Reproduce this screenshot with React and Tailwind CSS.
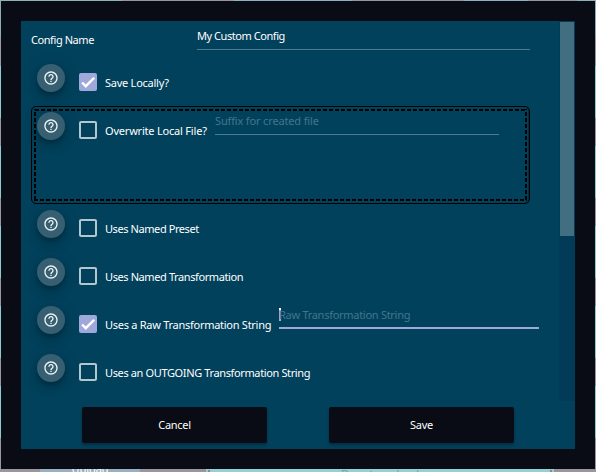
import React from "react";

function HelpButton() {
  return (
    <button className="mt-[6px] ml-[6px] flex size-7 shrink-0 items-center justify-center rounded-full bg-[#365f72] shadow-[0_3px_5px_-1px_rgba(0,0,0,0.2),0_6px_10px_rgba(0,0,0,0.14),0_1px_18px_rgba(0,0,0,0.12)]">
      <svg viewBox="0 0 24 24" className="size-4 fill-[#f0f3f4]">
        <path d="M11 18h2v-2h-2v2zm1-16C6.48 2 2 6.48 2 12s4.48 10 10 10 10-4.48 10-10S17.52 2 12 2zm0 18c-4.41 0-8-3.59-8-8s3.59-8 8-8 8 3.59 8 8-3.59 8-8 8zm0-14c-2.21 0-4 1.79-4 4h2c0-1.1.9-2 2-2s2 .9 2 2c0 2-3 1.75-3 5h2c0-2.25 3-2.5 3-5 0-2.21-1.79-4-4-4z" />
      </svg>
    </button>
  );
}

function Checkbox({ checked }) {
  return checked ? (
    <span className="mt-[15px] ml-[14px] block size-[18px] shrink-0 rounded-[2px] bg-[#9fa8da]">
      <svg viewBox="0 0 24 24" className="size-[18px] fill-none stroke-white stroke-[3.2]">
        <path d="M4.1 12.7 9 17.6 20.3 6.3" />
      </svg>
    </span>
  ) : (
    <span className="mt-[15px] ml-[14px] block size-[18px] shrink-0 rounded-[2px] border-2 border-[#b3c6ce]" />
  );
}

function Row({ label, width, checked, children }) {
  return (
    <div className="flex h-12 shrink-0 items-start">
      <HelpButton />
      <Checkbox checked={checked} />
      <span className={"mt-[17px] ml-2 h-4 shrink-0 leading-4 whitespace-nowrap " + width}>{label}</span>
      {children}
    </div>
  );
}

function EdgeColumn() {
  return (
    <div className="flex w-px flex-col">
      <div className="h-9 bg-[#8eadb3]" />
      <div className="h-[29px] bg-[#9b9aa0]" />
      <div className="h-[52px] bg-[#8ccdd1]" />
      <div className="h-7 bg-[#9b969e]" />
      <div className="h-[52px] bg-[#8ccdd1]" />
      <div className="h-[28px] bg-[#9b969e]" />
      <div className="h-[52px] bg-[#8ccdd1]" />
      <div className="h-[28px] bg-[#9b969e]" />
      <div className="h-[52px] bg-[#8ccdd1]" />
      <div className="h-[28px] bg-[#9b969e]" />
      <div className="h-[52px] bg-[#8ccdd1]" />
      <div className="grow bg-[#9b969e]" />
    </div>
  );
}

export default function App() {
  return (
    <div className="flex h-[472px] w-[596px] flex-col overflow-hidden bg-[#9b969e] font-['Noto_Sans',sans-serif] text-[11px] text-white">
      <div className="flex h-px shrink-0">
        <div className="w-[122px] bg-[#8fb1b8]" />
        <div className="w-[112px] bg-[#97969b]" />
        <div className="w-[118px] bg-[#8cb3bd]" />
        <div className="w-[112px] bg-[#97969b]" />
        <div className="w-[64px] bg-[#8cb3bd]" />
        <div className="w-[49px] bg-[#97969b]" />
        <div className="grow bg-[#8cb3bd]" />
      </div>
      <div className="flex h-[468px] shrink-0">
        <EdgeColumn />
        <div className="w-[594px] bg-[#090c14] p-5">
          <div className="flex h-[428px] flex-col bg-[#02415c]">
            <div className="flex h-[380px] overflow-hidden">
              <div className="flex w-[538px] flex-col pl-[10px]">
                <div className="flex h-[37px] shrink-0">
                  <span className="mt-[11px] w-[166px] leading-4 tracking-[-0.43px]">Config Name</span>
                  <div className="h-[29px] w-[333px] border-b border-[#4a7c90] pt-[7px] leading-4 tracking-[-0.45px]">My Custom Config</div>
                </div>
                <Row label="Save Locally?" width="w-[64px] tracking-[-0.25px]" checked />
                <div className="flex h-[98px] w-[499px] shrink-0 rounded-[5px] border border-black p-[2px] shadow-[inset_-1px_0_0_#022b3e]">
                  <div className="grow [background:linear-gradient(90deg,#000_4px,transparent_4px)_1px_0/6px_2px_repeat-x,linear-gradient(90deg,#000_4px,transparent_4px)_0_100%/6px_2px_repeat-x,linear-gradient(#000_4px,transparent_4px)_0_3px/2px_6px_repeat-y,linear-gradient(#000_4px,transparent_4px)_100%_3px/2px_6px_repeat-y]">
                    <div className="-mt-[3px] -ml-[3px]">
                      <Row label="Overwrite Local File?" width="w-[102px] tracking-[-0.2px]">
                        <div className="ml-2 h-[29px] w-[284px] shrink-0 border-b border-[#4a7c90] pt-[7px] leading-4 tracking-[-0.15px] text-[#41778c]">Suffix for created file</div>
                      </Row>
                    </div>
                  </div>
                </div>
                <Row label="Uses Named Preset" width="w-[95px] tracking-[-0.42px]" />
                <Row label="Uses Named Transformation" width="w-[140px] tracking-[-0.4px]" />
                <Row label="Uses a Raw Transformation String" width="w-[166px] tracking-[-0.27px]" checked>
                  <div className="ml-2 flex h-[29px] w-[260px] shrink-0 border-b-2 border-[#9fa8da] pt-[7px] leading-4 tracking-[-0.28px] text-[#41778c]">
                    <span className="mt-px -mr-[2px] h-[13px] w-[2px] border-t-2 border-white bg-[#9fa8da]" />
                    <span>Raw Transformation String</span>
                  </div>
                </Row>
                <Row label="Uses an OUTGOING Transformation String" width="w-[206px] tracking-[-0.37px]" />
              </div>
              <div className="w-4 bg-[#023b58] px-px pt-px">
                <div className="h-[214px] bg-[#426e82]" />
              </div>
            </div>
            <div className="flex gap-[62px] pt-[6px] pl-[61px]">
              {["Cancel", "Save"].map((text) => (
                <button key={text} className="h-9 w-[185px] rounded-[2px] bg-[#090c14] pt-px tracking-[-0.3px] shadow-[0_2px_3px_rgba(0,0,0,0.3)]">{text}</button>
              ))}
            </div>
          </div>
        </div>
        <EdgeColumn />
      </div>
      <div className="flex h-[3px] shrink-0 overflow-hidden">
        <div className="w-10" />
        <div className="flex w-[100px] items-end justify-center bg-[#9aafc0] leading-[6px] text-white">Upload</div>
        <div className="w-[66px]" />
        <div className="flex w-[348px] items-start justify-between bg-[#96d0d5] px-[2px] leading-[14px] text-[#719fa8]">
          <span className="mt-px h-[2px] w-[2px] bg-[#8b8990]" />
          <span className="-mt-[2px]">Drop to upload</span>
          <span className="mt-px h-[2px] w-[2px] bg-[#8b8990]" />
        </div>
      </div>
    </div>
  );
}
